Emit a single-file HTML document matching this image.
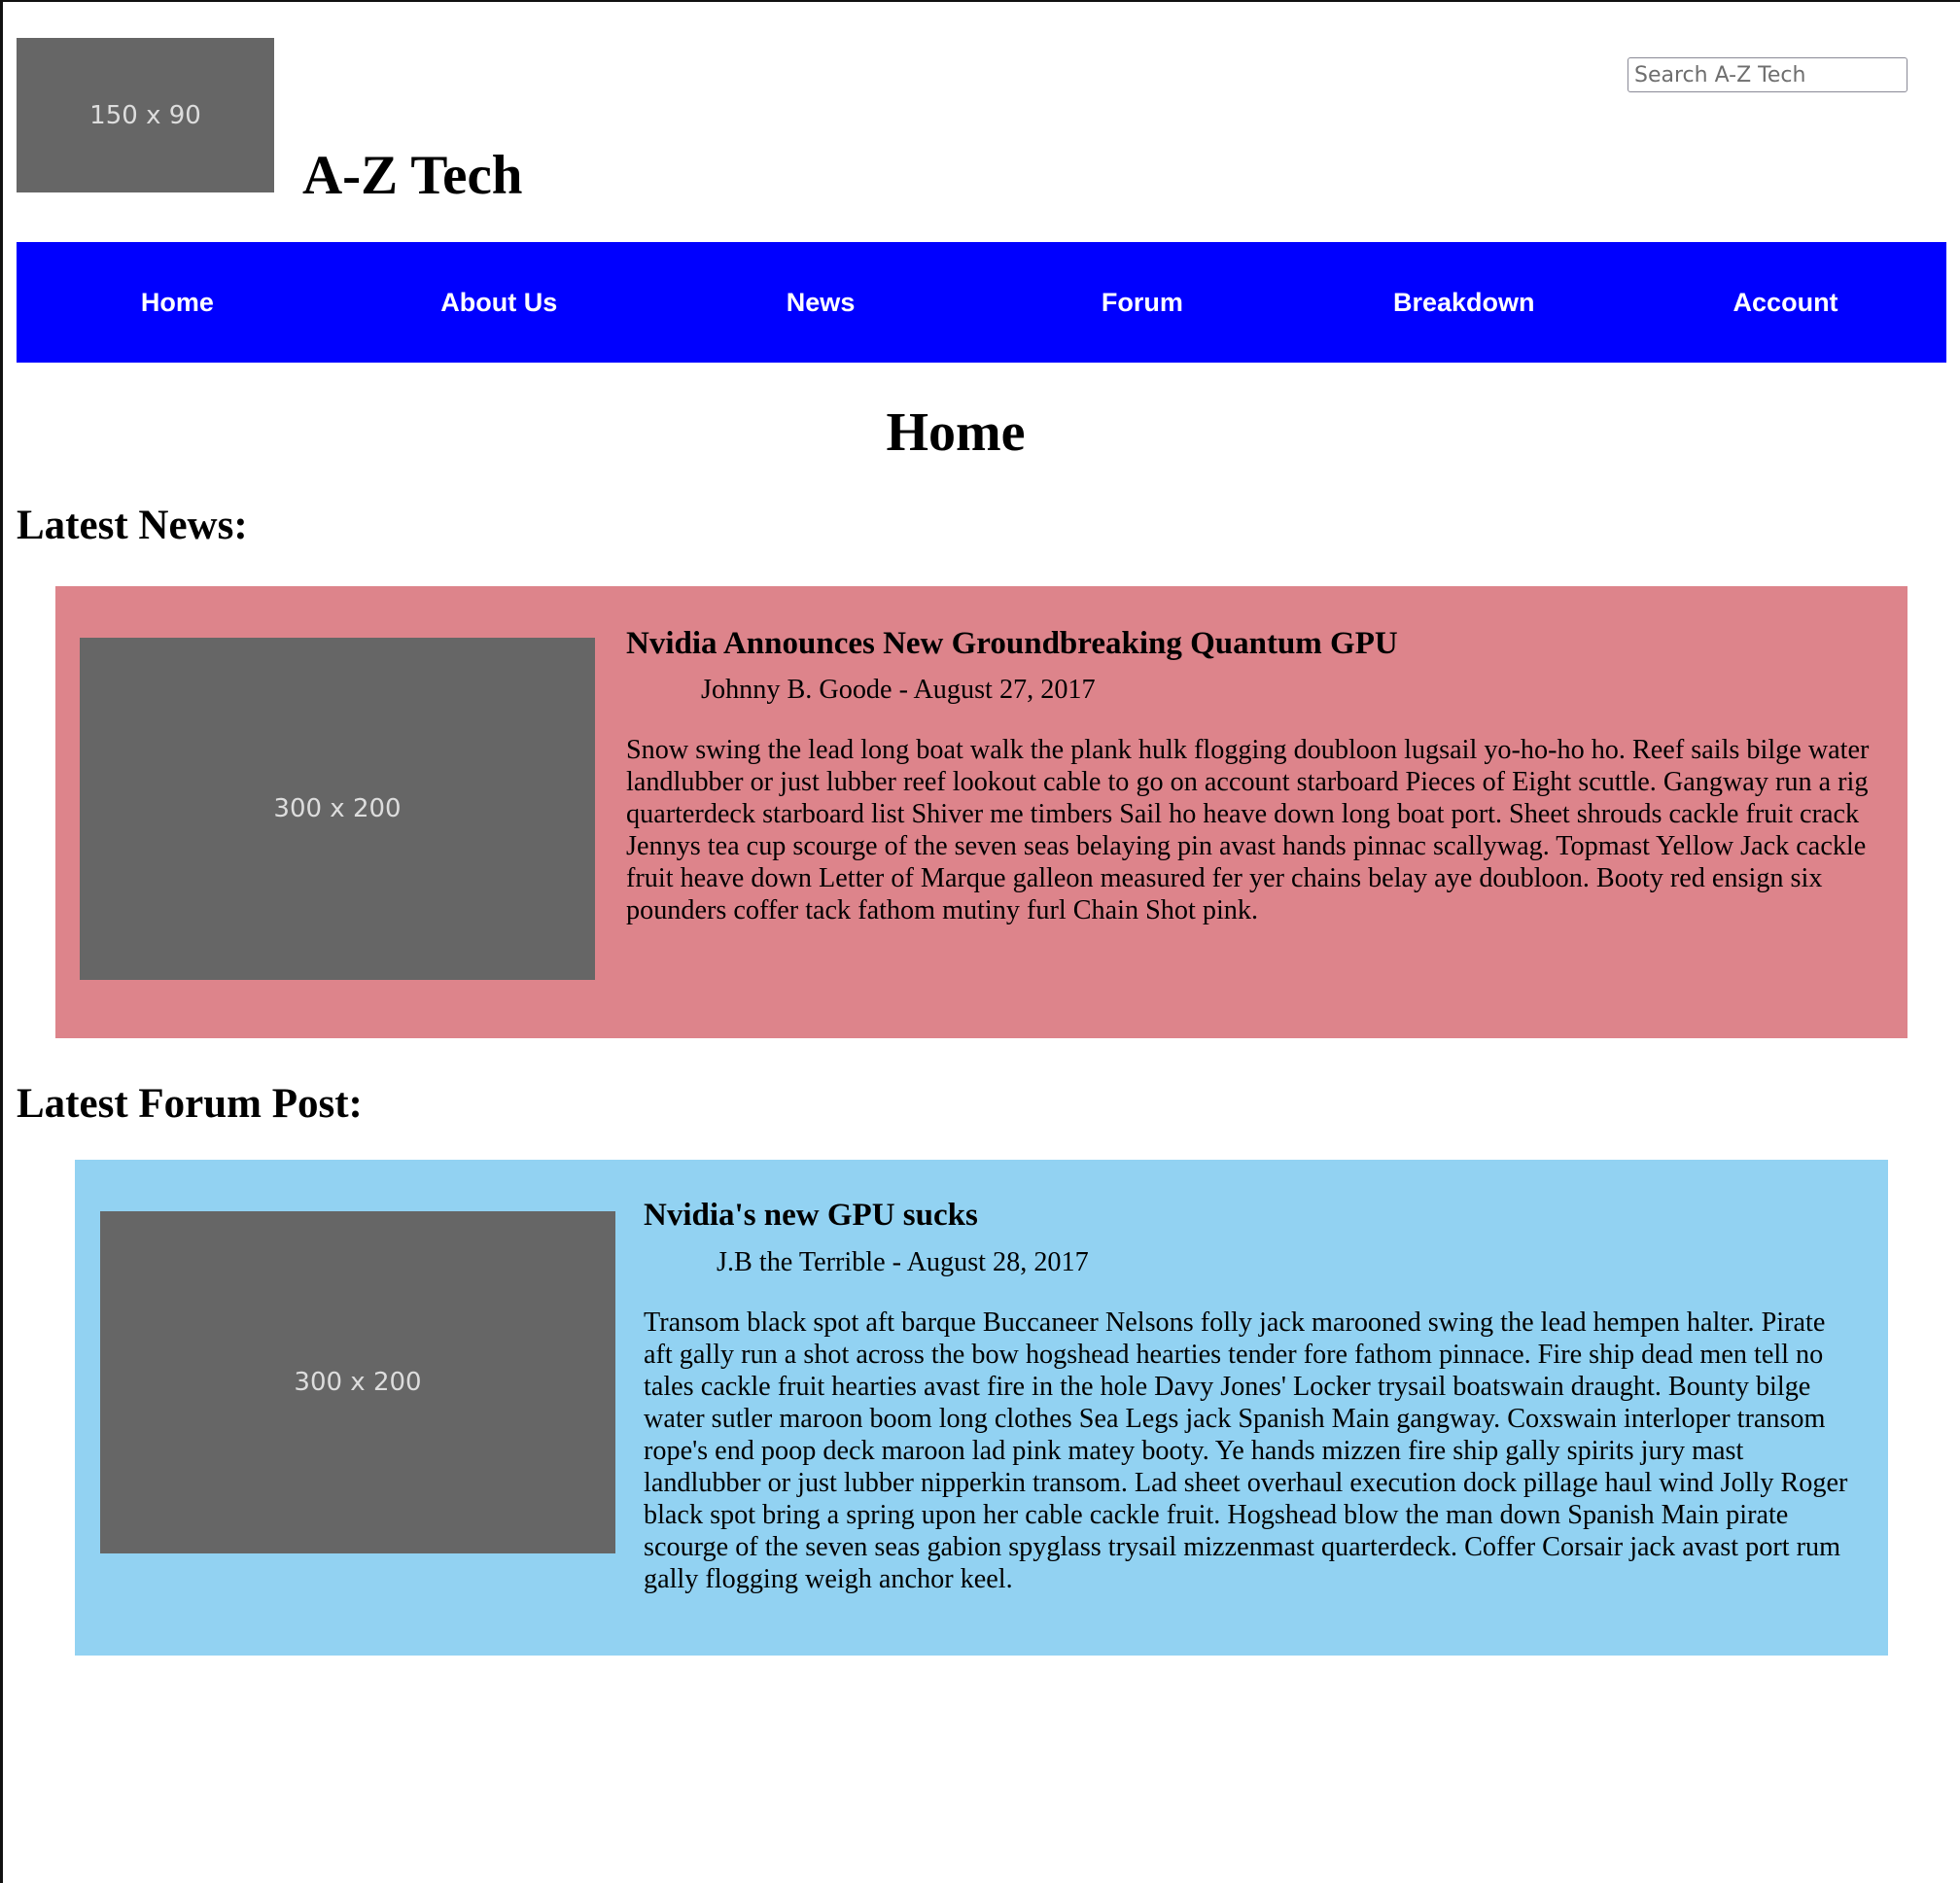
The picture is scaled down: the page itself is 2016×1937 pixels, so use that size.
<!DOCTYPE html>
<html><head><meta charset="utf-8"><style>
*{margin:0;padding:0;box-sizing:border-box}
html,body{width:2016px;height:1937px;overflow:hidden;background:#fff}
body{position:relative;font-family:"Liberation Serif",serif;color:#000}
.a{position:absolute;white-space:nowrap}
.ph{position:absolute;background:#666;color:#ddd;font-family:"DejaVu Sans",sans-serif;display:flex;align-items:center;justify-content:center}
.nav{position:absolute;left:17px;top:249px;width:1985px;height:124px;background:#00f;display:flex}
.nav div{flex:1;text-align:center;color:#fff;font:bold 27px/124px "Liberation Sans",sans-serif}
.t{font-size:33px;font-weight:bold}
.p{font-size:28.2px;line-height:33px}
</style></head><body>
<div style="position:absolute;left:0;top:0;width:3px;height:1937px;background:#111"></div>
<div style="position:absolute;left:0;top:0;width:2016px;height:2px;background:#111"></div>
<div class="ph" style="left:17px;top:39px;width:265px;height:159px;font-size:26px">150 x 90</div>
<div class="a" style="left:311px;top:146px;font-size:57px;font-weight:bold;line-height:70px">A-Z Tech</div>
<div class="a" style="left:1674px;top:59px;width:288px;height:36px;border:1px solid #8a8a96;border-radius:3px;font:22px/36px 'DejaVu Sans',sans-serif;color:#6e6e6e;padding-left:6px">Search A-Z Tech</div>
<div class="nav"><div>Home</div><div>About Us</div><div>News</div><div>Forum</div><div>Breakdown</div><div>Account</div></div>
<div class="a" style="left:0;width:1966px;text-align:center;top:410px;font-size:56px;font-weight:bold;line-height:70px">Home</div>
<div class="a" style="left:17px;top:514px;font-size:43px;font-weight:bold;line-height:54px">Latest News:</div>
<div style="position:absolute;left:57px;top:603px;width:1905px;height:465px;background:#dd848b"></div>
<div class="ph" style="left:82px;top:656px;width:530px;height:352px;font-size:26px">300 x 200</div>
<div class="a t" style="left:644px;top:642px;line-height:40px">Nvidia Announces New Groundbreaking Quantum GPU</div>
<div class="a p" style="left:721px;top:693px">Johnny B. Goode - August 27, 2017</div>
<div class="a p" style="left:644px;top:755px">Snow swing the lead long boat walk the plank hulk flogging doubloon lugsail yo-ho-ho ho. Reef sails bilge water<br>landlubber or just lubber reef lookout cable to go on account starboard Pieces of Eight scuttle. Gangway run a rig<br>quarterdeck starboard list Shiver me timbers Sail ho heave down long boat port. Sheet shrouds cackle fruit crack<br>Jennys tea cup scourge of the seven seas belaying pin avast hands pinnac scallywag. Topmast Yellow Jack cackle<br>fruit heave down Letter of Marque galleon measured fer yer chains belay aye doubloon. Booty red ensign six<br>pounders coffer tack fathom mutiny furl Chain Shot pink.</div>
<div class="a" style="left:17px;top:1109px;font-size:43px;font-weight:bold;line-height:54px">Latest Forum Post:</div>
<div style="position:absolute;left:77px;top:1193px;width:1865px;height:510px;background:#92d2f2"></div>
<div class="ph" style="left:103px;top:1246px;width:530px;height:352px;font-size:26px">300 x 200</div>
<div class="a t" style="left:662px;top:1230px;line-height:40px">Nvidia's new GPU sucks</div>
<div class="a p" style="left:737px;top:1282px">J.B the Terrible - August 28, 2017</div>
<div class="a p" style="left:662px;top:1344px">Transom black spot aft barque Buccaneer Nelsons folly jack marooned swing the lead hempen halter. Pirate<br>aft gally run a shot across the bow hogshead hearties tender fore fathom pinnace. Fire ship dead men tell no<br>tales cackle fruit hearties avast fire in the hole Davy Jones' Locker trysail boatswain draught. Bounty bilge<br>water sutler maroon boom long clothes Sea Legs jack Spanish Main gangway. Coxswain interloper transom<br>rope's end poop deck maroon lad pink matey booty. Ye hands mizzen fire ship gally spirits jury mast<br>landlubber or just lubber nipperkin transom. Lad sheet overhaul execution dock pillage haul wind Jolly Roger<br>black spot bring a spring upon her cable cackle fruit. Hogshead blow the man down Spanish Main pirate<br>scourge of the seven seas gabion spyglass trysail mizzenmast quarterdeck. Coffer Corsair jack avast port rum<br>gally flogging weigh anchor keel.</div>
</body></html>
